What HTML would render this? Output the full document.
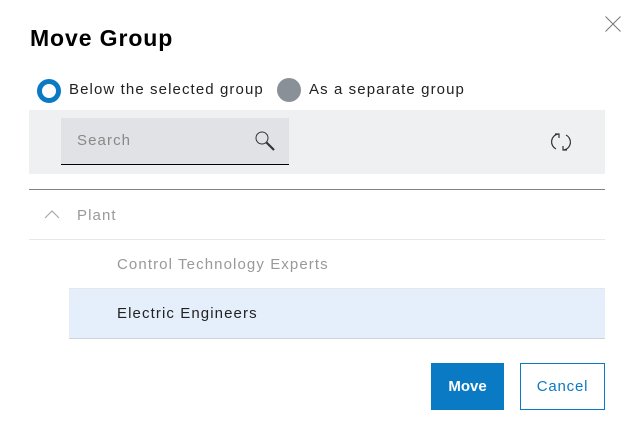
<!DOCTYPE html>
<html><head><style>
body{margin:0;width:633px;height:440px;background:#fff;font-family:"Liberation Sans",sans-serif;position:relative;overflow:hidden}
.a{position:absolute}
.t{font-size:15px;letter-spacing:1.1px}
</style></head><body>
<div class="a" style="left:30px;top:25px;font-size:23px;font-weight:bold;color:#000;letter-spacing:0.9px">Move Group</div>
<svg class="a" style="left:604px;top:15px" width="18" height="18"><path d="M1.5 1.5L16.5 16.5M16.5 1.5L1.5 16.5" stroke="#777" stroke-width="1"/></svg>
<div class="a" style="left:37px;top:79px;width:14px;height:14px;border:5px solid #0a7ac4;border-radius:50%"></div>
<div class="a t" style="left:69px;top:81px;color:#222">Below the selected group</div>
<div class="a" style="left:277px;top:78px;width:24px;height:24px;background:#8a9097;border-radius:50%"></div>
<div class="a t" style="left:309px;top:81px;color:#222">As a separate group</div>
<div class="a" style="left:29px;top:110px;width:576px;height:64px;background:#eff0f2"></div>
<div class="a" style="left:61px;top:118px;width:228px;height:46px;background:#e0e2e5;border-bottom:1px solid #000"></div>
<div class="a t" style="left:77px;top:132px;color:#888">Search</div>
<svg class="a" style="left:254px;top:130px" width="24" height="24"><circle cx="8" cy="8" r="6" fill="none" stroke="#333" stroke-width="1"/><path d="M12.5 12.5L20 20" stroke="#333" stroke-width="2.2"/></svg>
<svg class="a" style="left:549px;top:130px" width="24" height="24"><path d="M9 4A8 8 0 0 0 7 19M15 20A8 8 0 0 0 17 5" fill="none" stroke="#333" stroke-width="1.2"/><path d="M6 4L10 4L10 8M18 20L14 20L14 16" fill="none" stroke="#333" stroke-width="1.2"/></svg>
<div class="a" style="left:29px;top:189px;width:576px;height:1px;background:#7d8389"></div>
<svg class="a" style="left:44px;top:208px" width="16" height="12"><path d="M1 10L8 3L15 10" fill="none" stroke="#aaa" stroke-width="1.2"/></svg>
<div class="a t" style="left:77px;top:207px;color:#999">Plant</div>
<div class="a" style="left:29px;top:239px;width:576px;height:1px;background:#e8e8e8"></div>
<div class="a t" style="left:117px;top:256px;color:#999">Control Technology Experts</div>
<div class="a" style="left:69px;top:288px;width:536px;height:49px;background:#e5effb;border-top:1px solid #e3e6ea;border-bottom:1px solid #cfd4da"></div>
<div class="a t" style="left:117px;top:305px;color:#222">Electric Engineers</div>
<div class="a" style="left:431px;top:363px;width:73px;height:47px;background:#0a7ac4;color:#fff;font-size:15px;font-weight:bold;display:flex;align-items:center;justify-content:center">Move</div>
<div class="a" style="left:520px;top:363px;width:83px;height:45px;border:1px solid #0a7ac4;color:#0a7ac4;font-size:15px;letter-spacing:0.8px;display:flex;align-items:center;justify-content:center">Cancel</div>
</body></html>
